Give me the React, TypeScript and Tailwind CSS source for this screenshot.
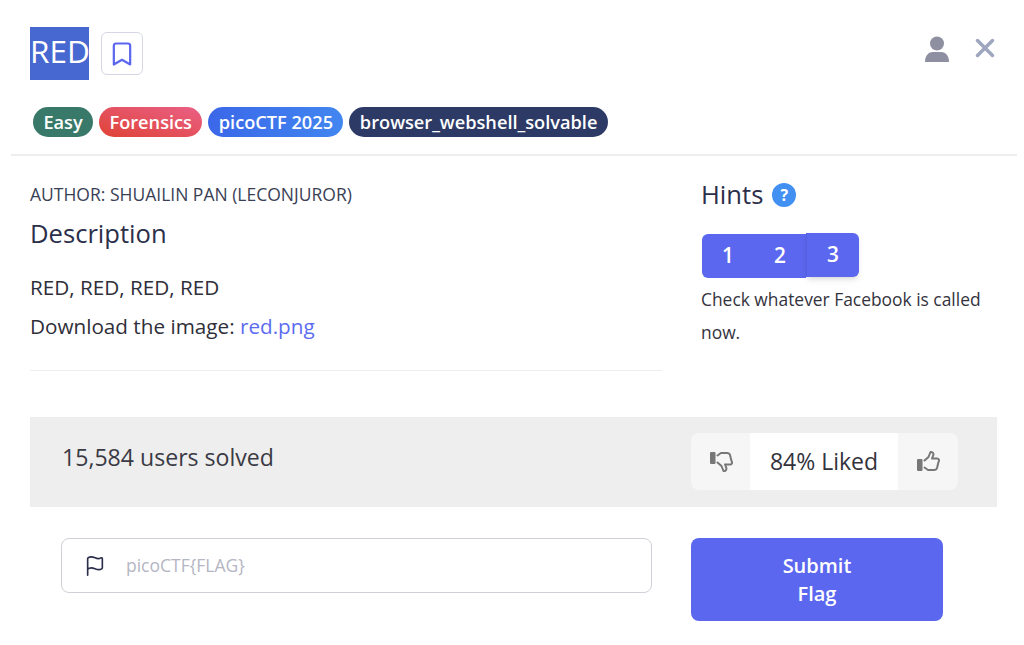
import React from 'react';
import { Bookmark, Flag, X } from 'lucide-react';

const tagClass = "h-[30px] flex items-center rounded-full px-[10.4px] pt-[2px] text-[18.2px] font-semibold text-white";

const ThumbIcon = ({ down }: { down?: boolean }) => (
    <svg width="24" height="24" viewBox="0 0 24 24" fill="none" className={down ? "rotate-180 -scale-x-100" : ""}>
        <rect x="1" y="9" width="5.5" height="12" rx="1" fill="#777" />
        <path d="M8.5 10.5 L12.5 7 L14.5 2 C17 1.5 18 4 17 6 L16 8.5 L21 8.5 C23 8.5 23.5 10.5 22.5 12 L21 18 C20.5 19.5 19.5 20 18 20 L12 20 L8.5 17.5" stroke="#777" strokeWidth="2" strokeLinejoin="round" strokeLinecap="round" />
    </svg>
);

const App: React.FC = () => {
  return (
    <div className="w-[1024px] h-[645px] overflow-hidden bg-white text-[#2f2f3a] font-['Open_Sans',sans-serif]">
        <div className="pt-[27px] px-[30px] flex justify-between">
            <div className="flex items-center gap-[12px]">
                <h1 className="w-[59px] h-[53px] bg-[#4668d0] text-white text-[31.5px] leading-[47px] text-center pb-[6px] whitespace-nowrap">RED</h1>
                <button className="w-[42px] h-[43px] flex items-center justify-center border border-[#d5d8e4] rounded-md">
                    <Bookmark size={28} strokeWidth={1.9} color="#5c67ef" />
                </button>
            </div>
            <div className="flex items-start gap-[21px] pt-[9px] -mr-[6px]">
                <svg width="24" height="26" viewBox="0 0 24 26" fill="#8e8fa1">
                    <circle cx="12" cy="7.5" r="7" />
                    <path d="M0 26 C0 19 4 16 8 16 L16 16 C20 16 24 19 24 26 Z" />
                </svg>
                <X size={30} strokeWidth={2.8} color="#9fa6bf" className="-mt-[3px]" />
            </div>
        </div>

        <div className="mt-[27px] pl-[33px] flex gap-[6px]">
            <span className={`${tagClass} bg-[#38796a]`}>Easy</span>
            <span className={`${tagClass} bg-gradient-to-tr from-[#df4231] to-[#ea5f85]`}>Forensics</span>
            <span className={`${tagClass} bg-gradient-to-r from-[#3b67e8] to-[#4286f0]`}>picoCTF 2025</span>
            <span className={`${tagClass} bg-[#2d3a66]`}>browser_webshell_solvable</span>
        </div>

        <div className="mt-[17px] ml-[11px] w-[1006px] h-[2px] bg-[#eeeeee]"></div>

        <div className="mt-[28px] pl-[30px] flex">
            <div className="w-[632px]">
                <p className="text-[17.5px] leading-[22px] text-[#3a3f56] uppercase whitespace-nowrap -mt-px">Author: Shuailin Pan (LeConjuror)</p>
                <h3 className="mt-[12px] text-[25.6px] leading-[33px] text-[#2b2f4a]">Description</h3>
                <p className="mt-[24px] text-[20.7px] leading-[26px]">RED, RED, RED, RED</p>
                <p className="mt-[13px] text-[20.7px] leading-[26px]">Download the image: <a className="text-[#5c6cf0]">red.png</a></p>
                <div className="mt-[31px] h-px bg-[#eeeeee]"></div>
            </div>
            <div className="ml-[40px] w-[290px]">
                <div className="flex items-center gap-[9px] -mt-[6px] -ml-px">
                    <h3 className="text-[25.6px] leading-[33px] text-[#2b2f4a]">Hints</h3>
                    <span className="w-[24px] h-[24px] rounded-full bg-[#4190f2] text-white text-[16px] font-bold flex items-center justify-center">?</span>
                </div>
                <div className="mt-[22px] flex items-start">
                    <button className="w-[52px] h-[44px] mt-[1px] bg-[#5c67ef] text-white text-[20.8px] font-semibold rounded-l-md">1</button>
                    <button className="w-[52px] h-[44px] mt-[1px] bg-[#5c67ef] text-white text-[20.8px] font-semibold">2</button>
                    <button className="w-[53px] h-[44px] bg-[#5c67ef] text-white text-[20.8px] font-semibold rounded-r-md shadow-md border-l border-[#5560e0]">3</button>
                </div>
                <p className="mt-[5px] -ml-px w-[290px] text-[17.4px] leading-[33px] text-[#33333d]">Check whatever Facebook is called now.</p>
            </div>
        </div>

        <div className="mt-[46px] mx-[30px] w-[967px] h-[90px] bg-[#eeeeee] pl-[32px] pr-[39px] flex justify-between">
            <p className="mt-[25px] text-[23.1px] leading-[30px] text-[#3a3a44]">15,584 users solved</p>
            <div className="mt-[16px] h-[57px] flex rounded-lg overflow-hidden bg-[#f6f6f6]">
                <div className="w-[59px] flex items-center justify-center pb-[1px]"><ThumbIcon down /></div>
                <div className="w-[148px] bg-white flex items-center justify-center text-[23px] text-[#33333d]">84% Liked</div>
                <div className="w-[60px] flex items-center justify-center"><ThumbIcon /></div>
            </div>
        </div>

        <div className="mt-[31px] pl-[61px] flex items-start">
            <div className="w-[591px] h-[55px] border border-[#cfd1d8] rounded-lg flex items-center">
                <Flag size={22} strokeWidth={1.8} color="#2b2f4a" className="ml-[22px]" />
                <input placeholder="picoCTF{FLAG}" className="ml-[20px] flex-1 outline-none text-[17.5px] placeholder:text-[#b4b6c4]" />
            </div>
            <button className="ml-[39px] w-[252px] h-[83px] bg-[#5c67ef] text-white text-[20px] leading-[28px] font-semibold rounded-lg">Submit<br />Flag</button>
        </div>
    </div>
  )
}

export default App
